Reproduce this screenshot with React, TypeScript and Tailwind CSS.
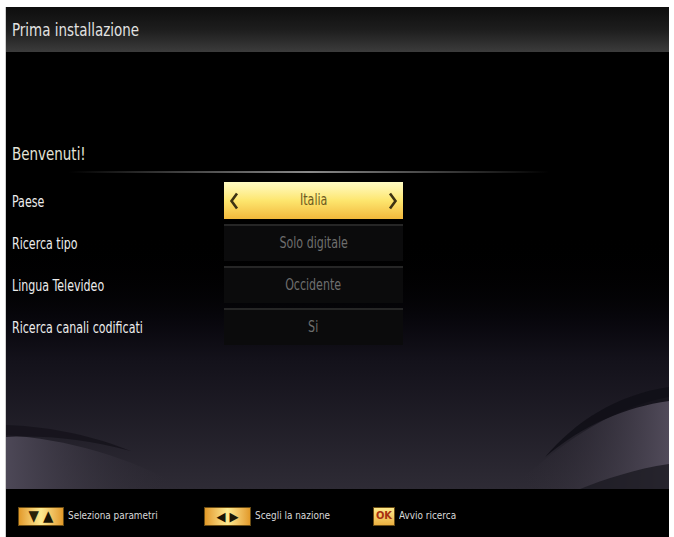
import React from "react";

const font = { fontFamily: '"DejaVu Sans Condensed", "Liberation Sans", sans-serif' };

const rows = [
  { label: "Paese", value: "Italia", active: true },
  { label: "Ricerca tipo", value: "Solo digitale" },
  { label: "Lingua Televideo", value: "Occidente" },
  { label: "Ricerca canali codificati", value: "Si" },
];

function Chevron({ dir }: { dir: "left" | "right" }) {
  return (
    <svg width="10" height="18" viewBox="0 0 10 18" className="shrink-0">
      <path
        d={dir === "left" ? "M8 1.5 L2.5 9 L8 16.5" : "M2 1.5 L7.5 9 L2 16.5"}
        fill="none"
        stroke="#3d3212"
        strokeWidth="2.6"
      />
    </svg>
  );
}

function Waves() {
  return (
    <svg className="absolute bottom-0 left-0 h-[150px] w-full" viewBox="0 0 664 150" preserveAspectRatio="none">
      <defs>
        <linearGradient id="wl" x1="0" y1="0" x2="1" y2="0">
          <stop offset="0" stopColor="#4d4857" />
          <stop offset="1" stopColor="#2a2730" stopOpacity="0" />
        </linearGradient>
        <linearGradient id="wr" x1="1" y1="0" x2="0" y2="0">
          <stop offset="0" stopColor="#514b5a" />
          <stop offset="1" stopColor="#2a2730" stopOpacity="0" />
        </linearGradient>
      </defs>
      <path d="M0 96 C60 100 125 118 180 150 L0 150 Z" fill="url(#wl)" />
      <path d="M0 86 C50 88 90 98 125 112 C80 100 40 96 0 98 Z" fill="#15131b" opacity="0.85" />
      <path d="M664 58 C600 70 550 110 505 150 L664 150 Z" fill="url(#wr)" />
      <path d="M664 48 C610 56 570 83 540 118 C578 86 620 68 664 62 Z" fill="#110f17" opacity="0.9" />
      <path d="M664 125 C630 130 600 140 575 150 L664 150 Z" fill="#1c1a22" opacity="0.8" />
    </svg>
  );
}

function Key({ children, w }: { children: React.ReactNode; w: string }) {
  return (
    <div
      className={`flex h-[19px] ${w} items-center justify-center gap-[4px] border border-[#6a4c14] bg-gradient-to-r from-[#e29a28] via-[#fdeb90] to-[#e29a28]`}
    >
      {children}
    </div>
  );
}

export default function App() {
  return (
    <div className="h-[537px] w-[674px] overflow-hidden bg-white pt-[7px] pl-[5px] pr-[5px]" style={font}>
      <div className="flex h-[530px] w-full flex-col border-l border-[#cfcfcf] bg-black">
        <div className="flex h-[45px] items-center bg-gradient-to-b from-[#0e0e0e] via-[#1d1d1d] to-[#3c3c3c] pl-[6px]">
          <span className="inline-block origin-left scale-x-[0.83] text-[18px] text-[#e2e2e2]">Prima installazione</span>
        </div>
        <div className="relative flex-1 bg-gradient-to-b from-black from-40% via-[#13111a] via-70% to-[#2e2b35]">
          <Waves />
          <div className="relative flex flex-col pl-[6px] pt-[92px]">
            <div className="text-[17px] leading-[20px] text-[#e4e4d8]">
              <span className="inline-block origin-left scale-x-[0.88]">Benvenuti!</span>
            </div>
            <div className="mt-[7px] ml-[57px] h-[2px] w-[480px] bg-gradient-to-r from-transparent via-[#8a8a8a] to-transparent" />
            <div className="mt-[9px] flex flex-col gap-[5px]">
              {rows.map((r) => (
                <div key={r.label} className="flex h-[37px] items-center">
                  <div className="w-[212px] pt-[3px] text-[15px] text-[#ececec]">
                    <span className="inline-block origin-left scale-x-[0.82]">{r.label}</span>
                  </div>
                  {r.active ? (
                    <div className="flex h-[37px] w-[179px] items-center justify-between bg-gradient-to-b from-[#fffbc2] via-[#fde66e] to-[#f2b83a] px-[5px]">
                      <Chevron dir="left" />
                      <span className="inline-block scale-x-[0.82] text-[15px] text-[#6b5a24]">{r.value}</span>
                      <Chevron dir="right" />
                    </div>
                  ) : (
                    <div className="flex h-[37px] w-[179px] items-center justify-center border-t-2 border-[#262626] bg-[#0b0b0c]">
                      <span className="inline-block scale-x-[0.82] text-[15px] text-[#6e6e6e]">{r.value}</span>
                    </div>
                  )}
                </div>
              ))}
            </div>
          </div>
        </div>
        <div className="flex h-[48px] items-center bg-black pl-[12px] pt-[6px] text-[11px] text-[#d8d8d8]">
          <Key w="w-[46px]">
            <span className="text-[15px] leading-none text-[#2a2208]">▼</span>
            <span className="text-[15px] leading-none text-[#1a1505]">▲</span>
          </Key>
          <span className="ml-[4px] w-[136px]">
            <span className="inline-block origin-left scale-x-[0.9]">Seleziona parametri</span>
          </span>
          <Key w="w-[47px]">
            <span className="text-[13px] leading-none text-[#1a1505]">◀</span>
            <span className="text-[13px] leading-none text-[#1a1505]">▶</span>
          </Key>
          <span className="ml-[4px] w-[118px]">
            <span className="inline-block origin-left scale-x-[0.9]">Scegli la nazione</span>
          </span>
          <div className="flex h-[19px] w-[22px] items-center justify-center border border-[#6a4c14] bg-gradient-to-b from-[#fde98a] to-[#eab040] text-[11px] font-bold text-[#a83010]">
            OK
          </div>
          <span className="ml-[4px]">
            <span className="inline-block origin-left scale-x-[0.9]">Avvio ricerca</span>
          </span>
        </div>
      </div>
    </div>
  );
}
